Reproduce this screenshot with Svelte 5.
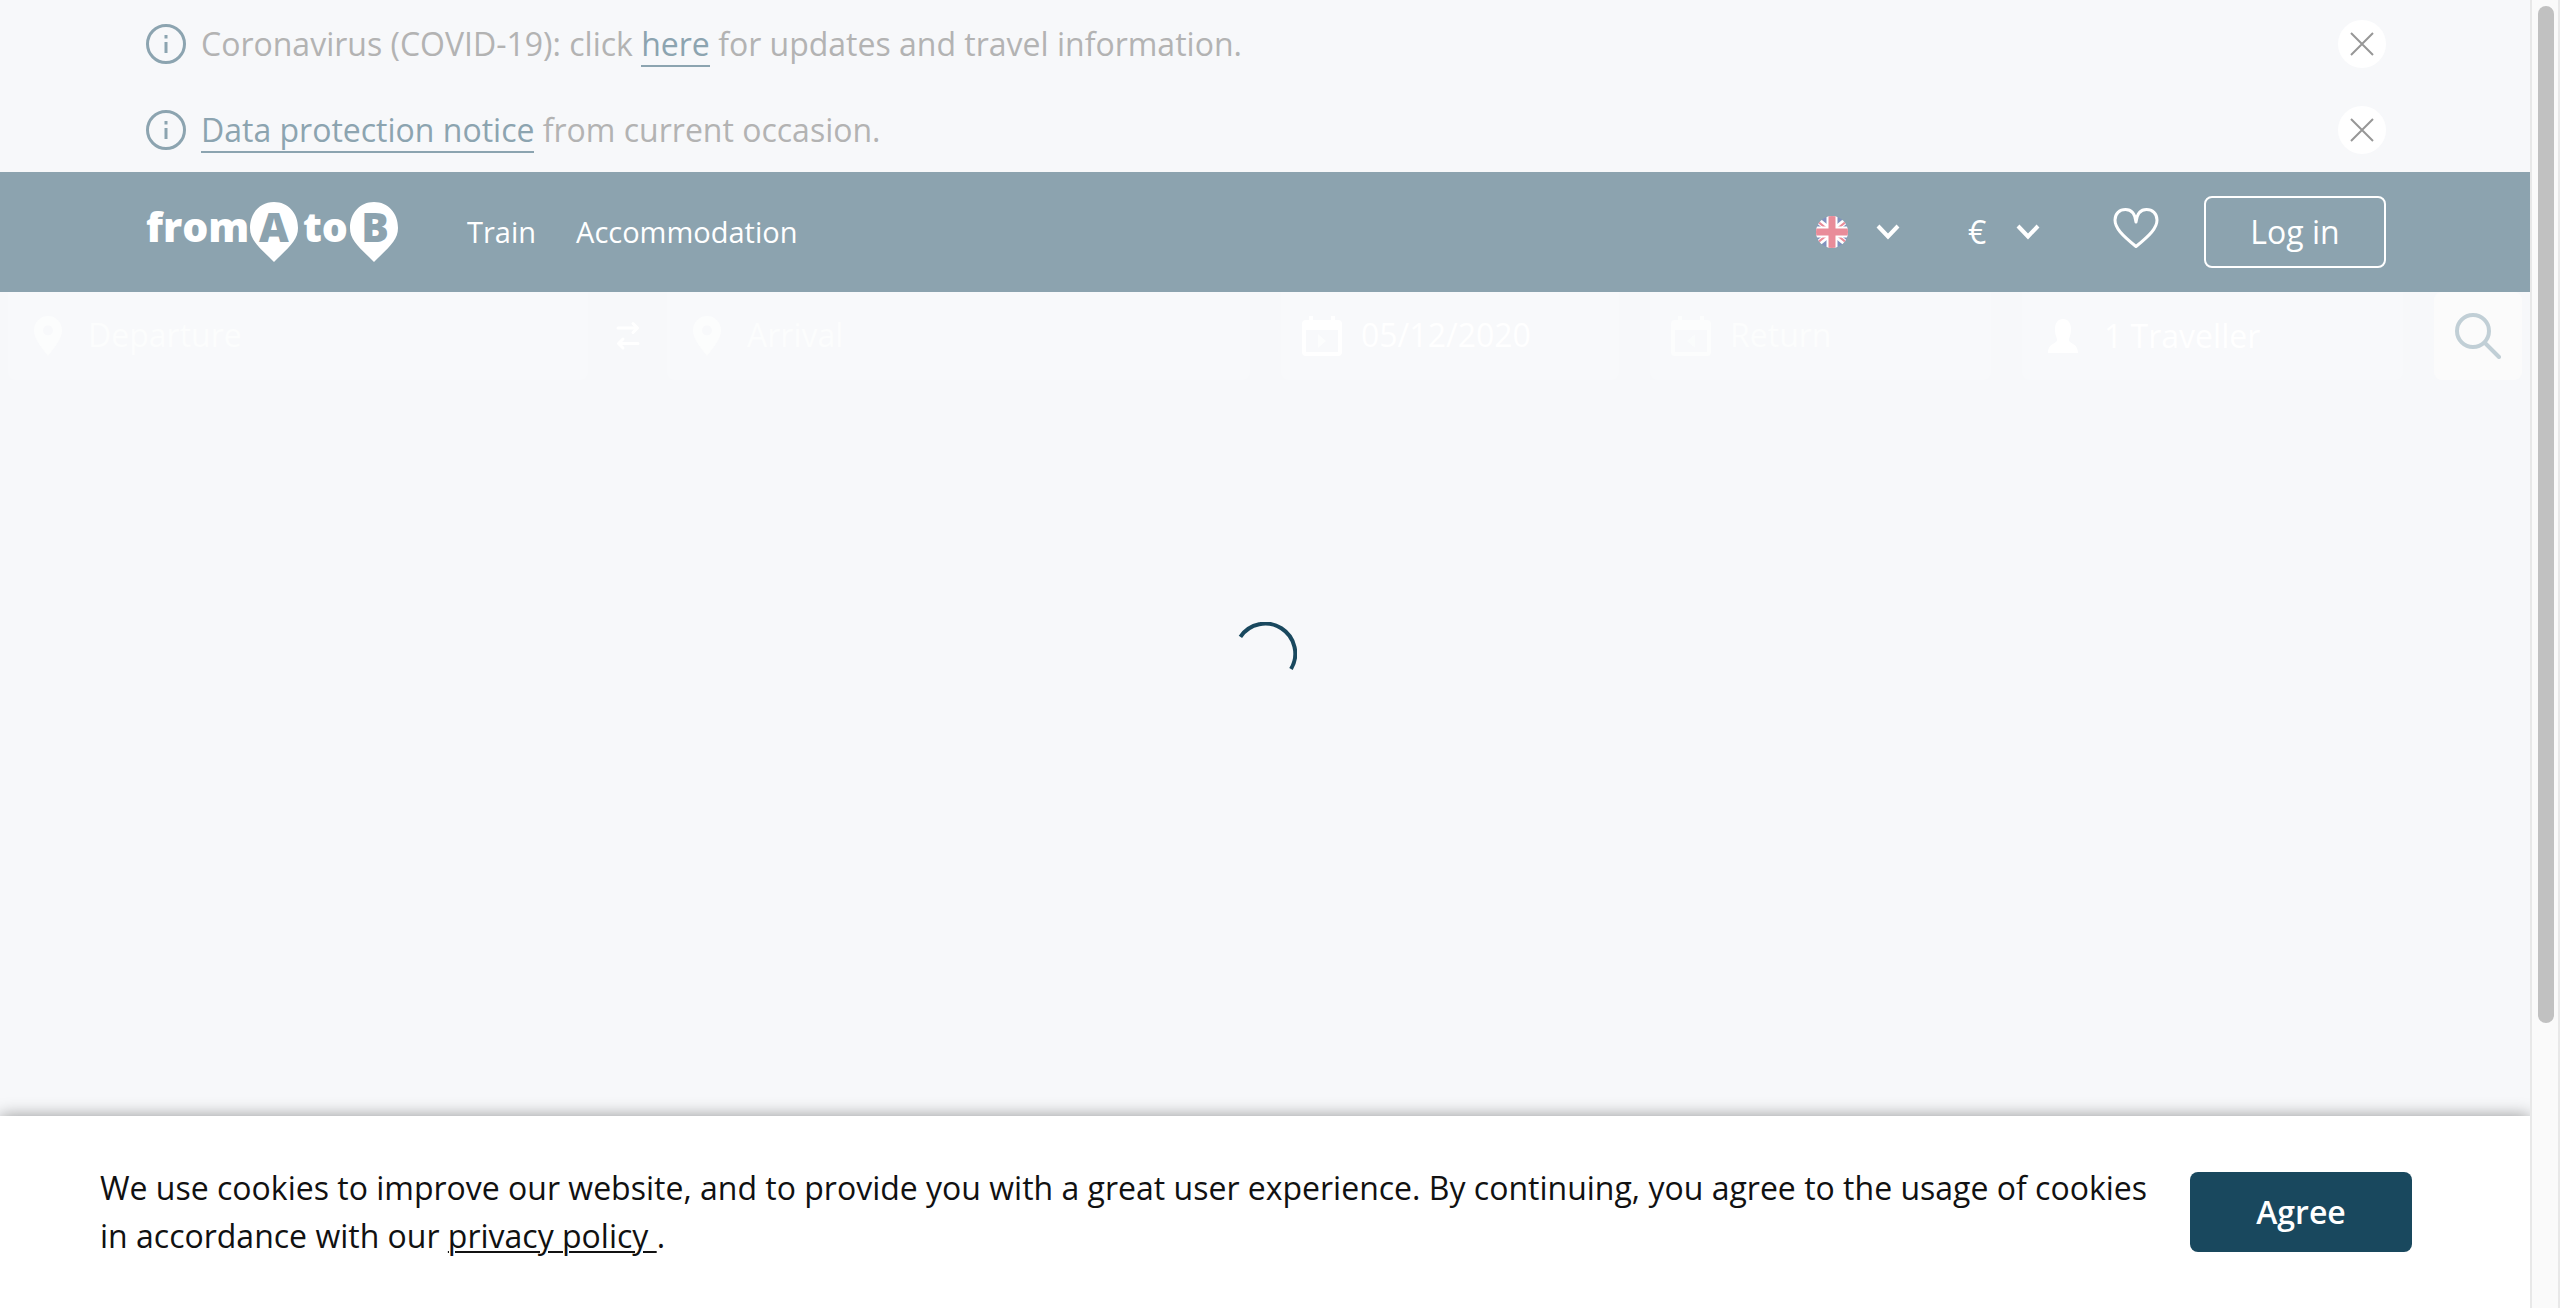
<script>
  let notices = $state([
    { id: 1, before: 'Coronavirus (COVID-19): click ', link: 'here', after: ' for updates and travel information.' },
    { id: 2, before: '', link: 'Data protection notice', after: ' from current occasion.' },
  ]);
  let cookiesOpen = $state(true);
  let departure = $state('');
  let arrival = $state('');
  let outbound = $state('05/12/2020');
  let inbound = $state('');

  function swap() {
    [departure, arrival] = [arrival, departure];
  }
</script>

{#snippet pin()}
  <svg class="pin" viewBox="0 0 28 40" aria-hidden="true">
    <path fill-rule="evenodd" d="M14 0C6 0 0 6.300 0 14.500 0 22 6 30 14 40 22 30 28 22 28 14.500 28 6.300 22 0 14 0Zm0 9.500a5 5 0 1 1 0 10 5 5 0 0 1 0-10Z" />
  </svg>
{/snippet}

{#snippet calendar(arrow)}
  <svg class="calendar" viewBox="0 0 40 40" aria-hidden="true">
    <path fill-rule="evenodd" d="M7 0h4v4h18V0h4v4h3a4 4 0 0 1 4 4v28a4 4 0 0 1-4 4H4a4 4 0 0 1-4-4V8a4 4 0 0 1 4-4h3ZM4 14v22h32V14Z" />
    <path d={arrow} opacity="0.600" />
  </svg>
{/snippet}

{#snippet chevron()}
  <svg class="chevron" viewBox="0 0 24 16" aria-hidden="true">
    <path d="M2 2 12 12.500 22 2" />
  </svg>
{/snippet}

<div class="window">
  <div class="page">
    {#each notices as notice (notice.id)}
      <div class="notice container">
        <svg class="info" viewBox="0 0 40 40" aria-hidden="true">
          <circle cx="20" cy="20" r="18.500" />
          <path d="M20 11v3.500M20 18v11" />
        </svg>
        <p>{notice.before}<a href="#notice">{notice.link}</a>{notice.after}</p>
        <button
          class="close"
          aria-label="Close notice"
          onclick={() => (notices = notices.filter((n) => n.id !== notice.id))}
        >
          <svg viewBox="0 0 24 24" aria-hidden="true"><path d="M1 1 23 23M23 1 1 23" /></svg>
        </button>
      </div>
    {/each}

    <header>
      <div class="bar container">
        <a class="logo" href="#home" aria-label="from A to B">
          <svg viewBox="0 0 252 60" aria-hidden="true">
            <text x="0" y="40">from</text>
            <path d="M128 0C114 0 104 11 104 26 104 38 113 45 128 60 143 45 152 38 152 26 152 11 142 0 128 0Z" />
            <text class="cut" x="128" y="40">A</text>
            <text x="157" y="40">to</text>
            <path d="M228 0C214 0 204 11 204 26 204 38 213 45 228 60 243 45 252 38 252 26 252 11 242 0 228 0Z" />
            <text class="cut" x="229" y="40">B</text>
          </svg>
        </a>
        <nav>
          <a href="#train">Train</a>
          <a href="#accommodation">Accommodation</a>
        </nav>
        <div class="tools">
          <button class="language" aria-label="Language" aria-haspopup="listbox">
            <svg class="flag" viewBox="0 0 32 32" aria-hidden="true">
              <defs><clipPath id="round"><circle cx="16" cy="16" r="16" /></clipPath></defs>
              <g clip-path="url(#round)">
                <rect width="32" height="32" fill="#8292be" />
                <path d="M0 3 32 29M32 3 0 29" stroke="#fff" stroke-width="6" />
                <path d="M0 4 16 17M32 4 16 17M0 28 16 15M32 28 16 15" stroke="#e98c99" stroke-width="2.200" />
                <path d="M16 0v32M0 16h32" stroke="#fff" stroke-width="11" />
                <path d="M16 0v32M0 16h32" stroke="#e98c99" stroke-width="7" />
              </g>
            </svg>
            {@render chevron()}
          </button>
          <label class="currency">
            <select aria-label="Currency">
              <option>€</option>
              <option>£</option>
              <option>$</option>
            </select>
            {@render chevron()}
          </label>
          <button class="favourites" aria-label="Favourites">
            <svg viewBox="0 0 46 42" aria-hidden="true">
              <path d="M23 39.500C9 28 2 21 2 13 2 6.500 6.500 2.500 12.500 2.500 18 2.500 22 6 23 15 24 6 28 2.500 33.500 2.500 39.500 2.500 44 6.500 44 13 44 21 37 28 23 39.500Z" />
            </svg>
          </button>
          <button class="login">Log in</button>
        </div>
      </div>
    </header>

    <form class="search" onsubmit={(e) => e.preventDefault()}>
      <div class="route">
        <label class="field faint">
          {@render pin()}
          <input type="text" placeholder="Departure" aria-label="Departure" bind:value={departure} />
        </label>
        <button class="swap" type="button" aria-label="Swap departure and arrival" onclick={swap}>
          <svg viewBox="0 0 24 30" aria-hidden="true">
            <path d="M2 7h19M17 2.500l4.500 4.500-4.500 4.500M22 22.500H3M7 18l-4.500 4.500L7 27" />
          </svg>
        </button>
        <label class="field faint">
          {@render pin()}
          <input type="text" placeholder="Arrival" aria-label="Arrival" bind:value={arrival} />
        </label>
      </div>
      <label class="field date">
        {@render calendar('M16 18 24 25 16 32Z')}
        <input type="text" aria-label="Departure date" bind:value={outbound} />
      </label>
      <label class="field date faint">
        {@render calendar('M24 18 16 25 24 32Z')}
        <input type="text" placeholder="Return" aria-label="Return date" bind:value={inbound} />
      </label>
      <label class="field">
        <svg class="person" viewBox="0 0 30 34" aria-hidden="true">
          <path d="M15 0c5 0 8 4 8 10 0 7-2 8-2 11 0 4 9 3 9 13H0C0 24 9 25 9 21c0-3-2-4-2-11C7 4 10 0 15 0Z" />
        </svg>
        <select aria-label="Travellers">
          <option>1 Traveller</option>
          <option>2 Travellers</option>
        </select>
      </label>
      <button class="submit" aria-label="Search">
        <svg viewBox="0 0 46 46" aria-hidden="true">
          <circle cx="18" cy="18" r="16" />
          <path d="M30 30 44 44" />
        </svg>
      </button>
    </form>

    <svg class="spinner" viewBox="0 0 64 64" role="img" aria-label="Loading">
      <path d="M7.400 14.800A30 30 0 0 1 58 47" />
    </svg>

    {#if cookiesOpen}
      <section class="cookies" aria-label="Cookies">
        <p>
          We use cookies to improve our website, and to provide you with a great user experience. By continuing, you
          agree to the usage of cookies in accordance with our <a href="#privacy">privacy policy&nbsp;</a>.
        </p>
        <button class="agree" onclick={() => (cookiesOpen = false)}>Agree</button>
      </section>
    {/if}
  </div>

  <div class="scrollbar" aria-hidden="true"><div class="thumb"></div></div>
</div>

<style>
  :global(body) {
    font-family: 'Open Sans', sans-serif;
    font-size: 32px;
    line-height: 48px;
    color: #111;
  }

  .window {
    display: grid;
    grid-template-columns: minmax(0, 1fr) 30px;
    min-height: 100vh;
    background: #f7f8fa;
  }

  .page {
    display: flex;
    flex-direction: column;
    overflow: hidden;
  }

  .container {
    box-sizing: border-box;
    width: calc(100% - 64px);
    max-width: 2242px;
    margin: 0 auto;
    padding-left: 2px;
  }

  svg {
    display: block;
    flex: none;
  }

  p {
    margin: 0;
  }

  button,
  input,
  select {
    box-sizing: border-box;
    margin: 0;
    padding: 0;
    border: 0;
    background: none;
    font: inherit;
    color: inherit;
    appearance: none;
  }

  button,
  select {
    cursor: pointer;
  }

  /* Notices */
  .notice {
    display: flex;
    align-items: center;
    gap: 15px;
    min-height: 86px;
    padding-top: 2px;
    color: #b3b3b3;
  }

  .notice p {
    flex: 1;
  }

  .notice a {
    color: #8ca4b0;
    text-decoration: none;
    border-bottom: 2px solid;
  }

  .info {
    width: 40px;
    height: 40px;
    fill: none;
    stroke: #8ca4b0;
    stroke-width: 3;
  }

  .close {
    display: grid;
    place-items: center;
    width: 48px;
    height: 48px;
    border-radius: 50%;
    background: #fff;
  }

  .close svg {
    width: 24px;
    height: 24px;
    stroke: #979797;
    stroke-width: 2;
  }

  /* Header */
  header {
    background: #8ca3af;
    color: #fff;
  }

  .bar {
    display: flex;
    align-items: center;
    height: 120px;
  }

  .logo svg {
    width: 252px;
    height: 60px;
    fill: #fff;
    overflow: visible;
  }

  .logo text {
    font-size: 41px;
    font-weight: 800;
  }

  .logo .cut {
    fill: #8ca3af;
    text-anchor: middle;
  }

  nav {
    display: flex;
    gap: 40px;
    margin-left: 69px;
    font-size: 29px;
  }

  nav a {
    color: inherit;
    text-decoration: none;
  }

  .tools {
    display: flex;
    align-items: center;
    margin-left: auto;
  }

  .language,
  .currency {
    display: flex;
    align-items: center;
    gap: 28px;
  }

  .currency {
    margin: 0 73px 0 68px;
  }

  .currency select {
    width: 20px;
  }

  .flag {
    width: 32px;
    height: 32px;
  }

  .chevron {
    width: 24px;
    height: 16px;
    fill: none;
    stroke: #fff;
    stroke-width: 4;
  }

  .favourites svg {
    width: 46px;
    height: 42px;
    margin-bottom: 8px;
    fill: none;
    stroke: #fff;
    stroke-width: 3;
    stroke-linejoin: round;
  }

  .login {
    width: 182px;
    height: 72px;
    margin-left: 45px;
    border: 2px solid #fff;
    border-radius: 8px;
  }

  /* Search form */
  .search {
    display: grid;
    grid-template-columns: 1242fr 338fr 341fr 381fr 88px;
    gap: 31px;
    padding: 0 8px;
    color: #fff;
  }

  .route {
    display: grid;
    grid-template-columns: 580fr 79px 583fr;
  }

  .field {
    display: flex;
    align-items: center;
    gap: 26px;
    min-width: 0;
    box-sizing: border-box;
    height: 88px;
    padding: 0 24px 0 26px;
    border-radius: 0 0 8px 8px;
    background: #f8f9fb;
    fill: currentColor;
  }

  .field.date {
    gap: 19px;
    padding-left: 21px;
  }

  .faint {
    color: #fcfdfd;
  }

  .field input,
  .field select {
    flex: 1;
    min-width: 0;
    height: 48px;
    padding-bottom: 2px;
    outline: 0;
  }

  .field input::placeholder {
    color: inherit;
    opacity: 1;
  }

  .pin {
    width: 28px;
    height: 40px;
  }

  .calendar {
    width: 40px;
    height: 40px;
  }

  .person {
    width: 30px;
    height: 34px;
  }

  .swap {
    display: grid;
    place-items: center;
  }

  .swap svg {
    width: 24px;
    height: 30px;
    fill: none;
    stroke: #fff;
    stroke-width: 3;
    stroke-linecap: round;
    stroke-linejoin: round;
  }

  .submit {
    display: grid;
    place-items: center;
    height: 88px;
    border-radius: 8px;
    background: #fbfbfb;
  }

  .submit svg {
    width: 46px;
    height: 46px;
    fill: none;
    stroke: #c1cfd6;
    stroke-width: 4;
    stroke-linecap: round;
  }

  /* Loading indicator, floating over the middle of the page */
  .spinner {
    position: fixed;
    inset: 0 30px 0 0;
    width: 64px;
    height: 64px;
    margin: auto;
    fill: none;
    stroke: #19485e;
    stroke-width: 4;
  }

  /* Cookie bar */
  .cookies {
    display: flex;
    align-items: center;
    gap: 40px;
    margin-top: auto;
    padding: 48px 118px 48px 100px;
    background: #fff;
    box-shadow: 0 0 16px rgba(0, 0, 0, 0.400);
  }

  .cookies p {
    flex: 1;
  }

  .cookies a {
    color: inherit;
    text-underline-offset: 3px;
    text-decoration-thickness: 2px;
  }

  .agree {
    width: 222px;
    height: 80px;
    border-radius: 8px;
    background: #19485e;
    color: #fff;
    font-weight: 600;
  }

  /* Scrollbar */
  .scrollbar {
    display: flex;
    flex-direction: column;
    box-sizing: border-box;
    padding: 6px 4px 6px 6px;
    border: solid #e8e8e8;
    border-width: 0 2px;
    background: #fafafa;
  }

  .thumb {
    height: 78.500%;
    border-radius: 8px;
    background: #c1c1c1;
  }
</style>
